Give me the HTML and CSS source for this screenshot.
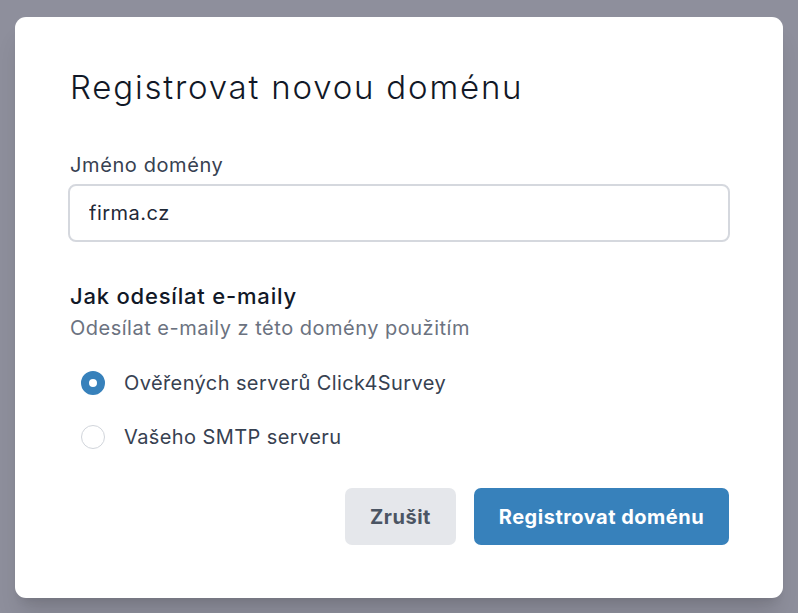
FILE: index.html
```html
<!DOCTYPE html>
<html lang="cs">
<head>
<meta charset="utf-8">
<title>Registrovat novou doménu</title>
<link rel="stylesheet" href="styles.css">
</head>
<body>
<div class="backdrop">
  <div class="modal">
    <h1 class="title">Registrovat novou doménu</h1>
    <label class="label" for="domain">Jméno domény</label>
    <input class="input" id="domain" type="text" value="firma.cz">
    <h2 class="section">Jak odesílat e-maily</h2>
    <p class="hint">Odesílat e-maily z této domény použitím</p>
    <div class="radios">
      <label class="radio-row">
        <span class="radio checked"></span>
        <span class="radio-text">Ověřených serverů Click4Survey</span>
      </label>
      <label class="radio-row">
        <span class="radio"></span>
        <span class="radio-text">Vašeho SMTP serveru</span>
      </label>
    </div>
    <div class="actions">
      <button class="btn btn-cancel" type="button">Zrušit</button>
      <button class="btn btn-primary" type="button">Registrovat doménu</button>
    </div>
  </div>
</div>
</body>
</html>
```
FILE: styles.css
```css
* { box-sizing: border-box; }
html, body {
  margin: 0;
  padding: 0;
  height: 100%;
}
body {
  font-family: Inter, "Noto Sans", sans-serif;
  background: #8e8f9c;
}
.backdrop {
  padding: 17px 15px 0 15px;
}
.modal {
  width: 768px;
  height: 581px;
  background: #ffffff;
  border-radius: 11px;
  padding: 50px 53px 53px 53px;
  box-shadow: 0 20px 25px -5px rgba(0,0,0,0.12), 0 8px 10px -6px rgba(0,0,0,0.1);
  display: flex;
  flex-direction: column;
}
.title {
  margin: 0 0 44px 2px;
  font-size: 33px;
  line-height: 40px;
  font-weight: 300;
  letter-spacing: 1.8px;
  color: #111827;
}
.label {
  display: block;
  margin: 0 0 5px 2px;
  font-size: 20px;
  line-height: 28px;
  font-weight: 400;
  letter-spacing: 0.6px;
  color: #374151;
}
.input {
  display: block;
  width: 662px;
  height: 58px;
  border: 2px solid #d5d8de;
  border-radius: 8px;
  padding: 0 19px;
  font-family: inherit;
  font-size: 20px;
  letter-spacing: 0.5px;
  color: #1f2937;
  outline: none;
  margin: 0;
}
.section {
  margin: 39px 0 3px 2px;
  font-size: 22px;
  line-height: 30px;
  font-weight: 500;
  letter-spacing: 0.8px;
  color: #111827;
}
.hint {
  margin: 0 0 0 2px;
  font-size: 20px;
  line-height: 28px;
  letter-spacing: 0.5px;
  color: #6b7280;
}
.radios {
  display: flex;
  flex-direction: column;
  gap: 24px;
  margin: 26px 0 0 13px;
}
.radio-row {
  display: flex;
  align-items: center;
  gap: 19px;
  height: 30px;
}
.radio {
  width: 24px;
  height: 24px;
  border-radius: 50%;
  border: 1px solid #d1d5db;
  background: #fff;
  flex: none;
}
.radio.checked {
  border: 8px solid #3781bb;
}
.radio-text {
  font-size: 20px;
  line-height: 28px;
  letter-spacing: 0.4px;
  color: #374151;
}
.actions {
  display: flex;
  justify-content: flex-end;
  gap: 18px;
  margin-top: 36px;
  padding-right: 1px;
}
.btn {
  height: 57px;
  border: none;
  border-radius: 7px;
  font-family: inherit;
  font-size: 20px;
  font-weight: 700;
  letter-spacing: 0.5px;
  padding: 0;
  cursor: pointer;
}
.btn-cancel {
  width: 111px;
  background: #e5e7eb;
  color: #4b5563;
}
.btn-primary {
  width: 255px;
  background: #3781bb;
  color: #ffffff;
}
```
